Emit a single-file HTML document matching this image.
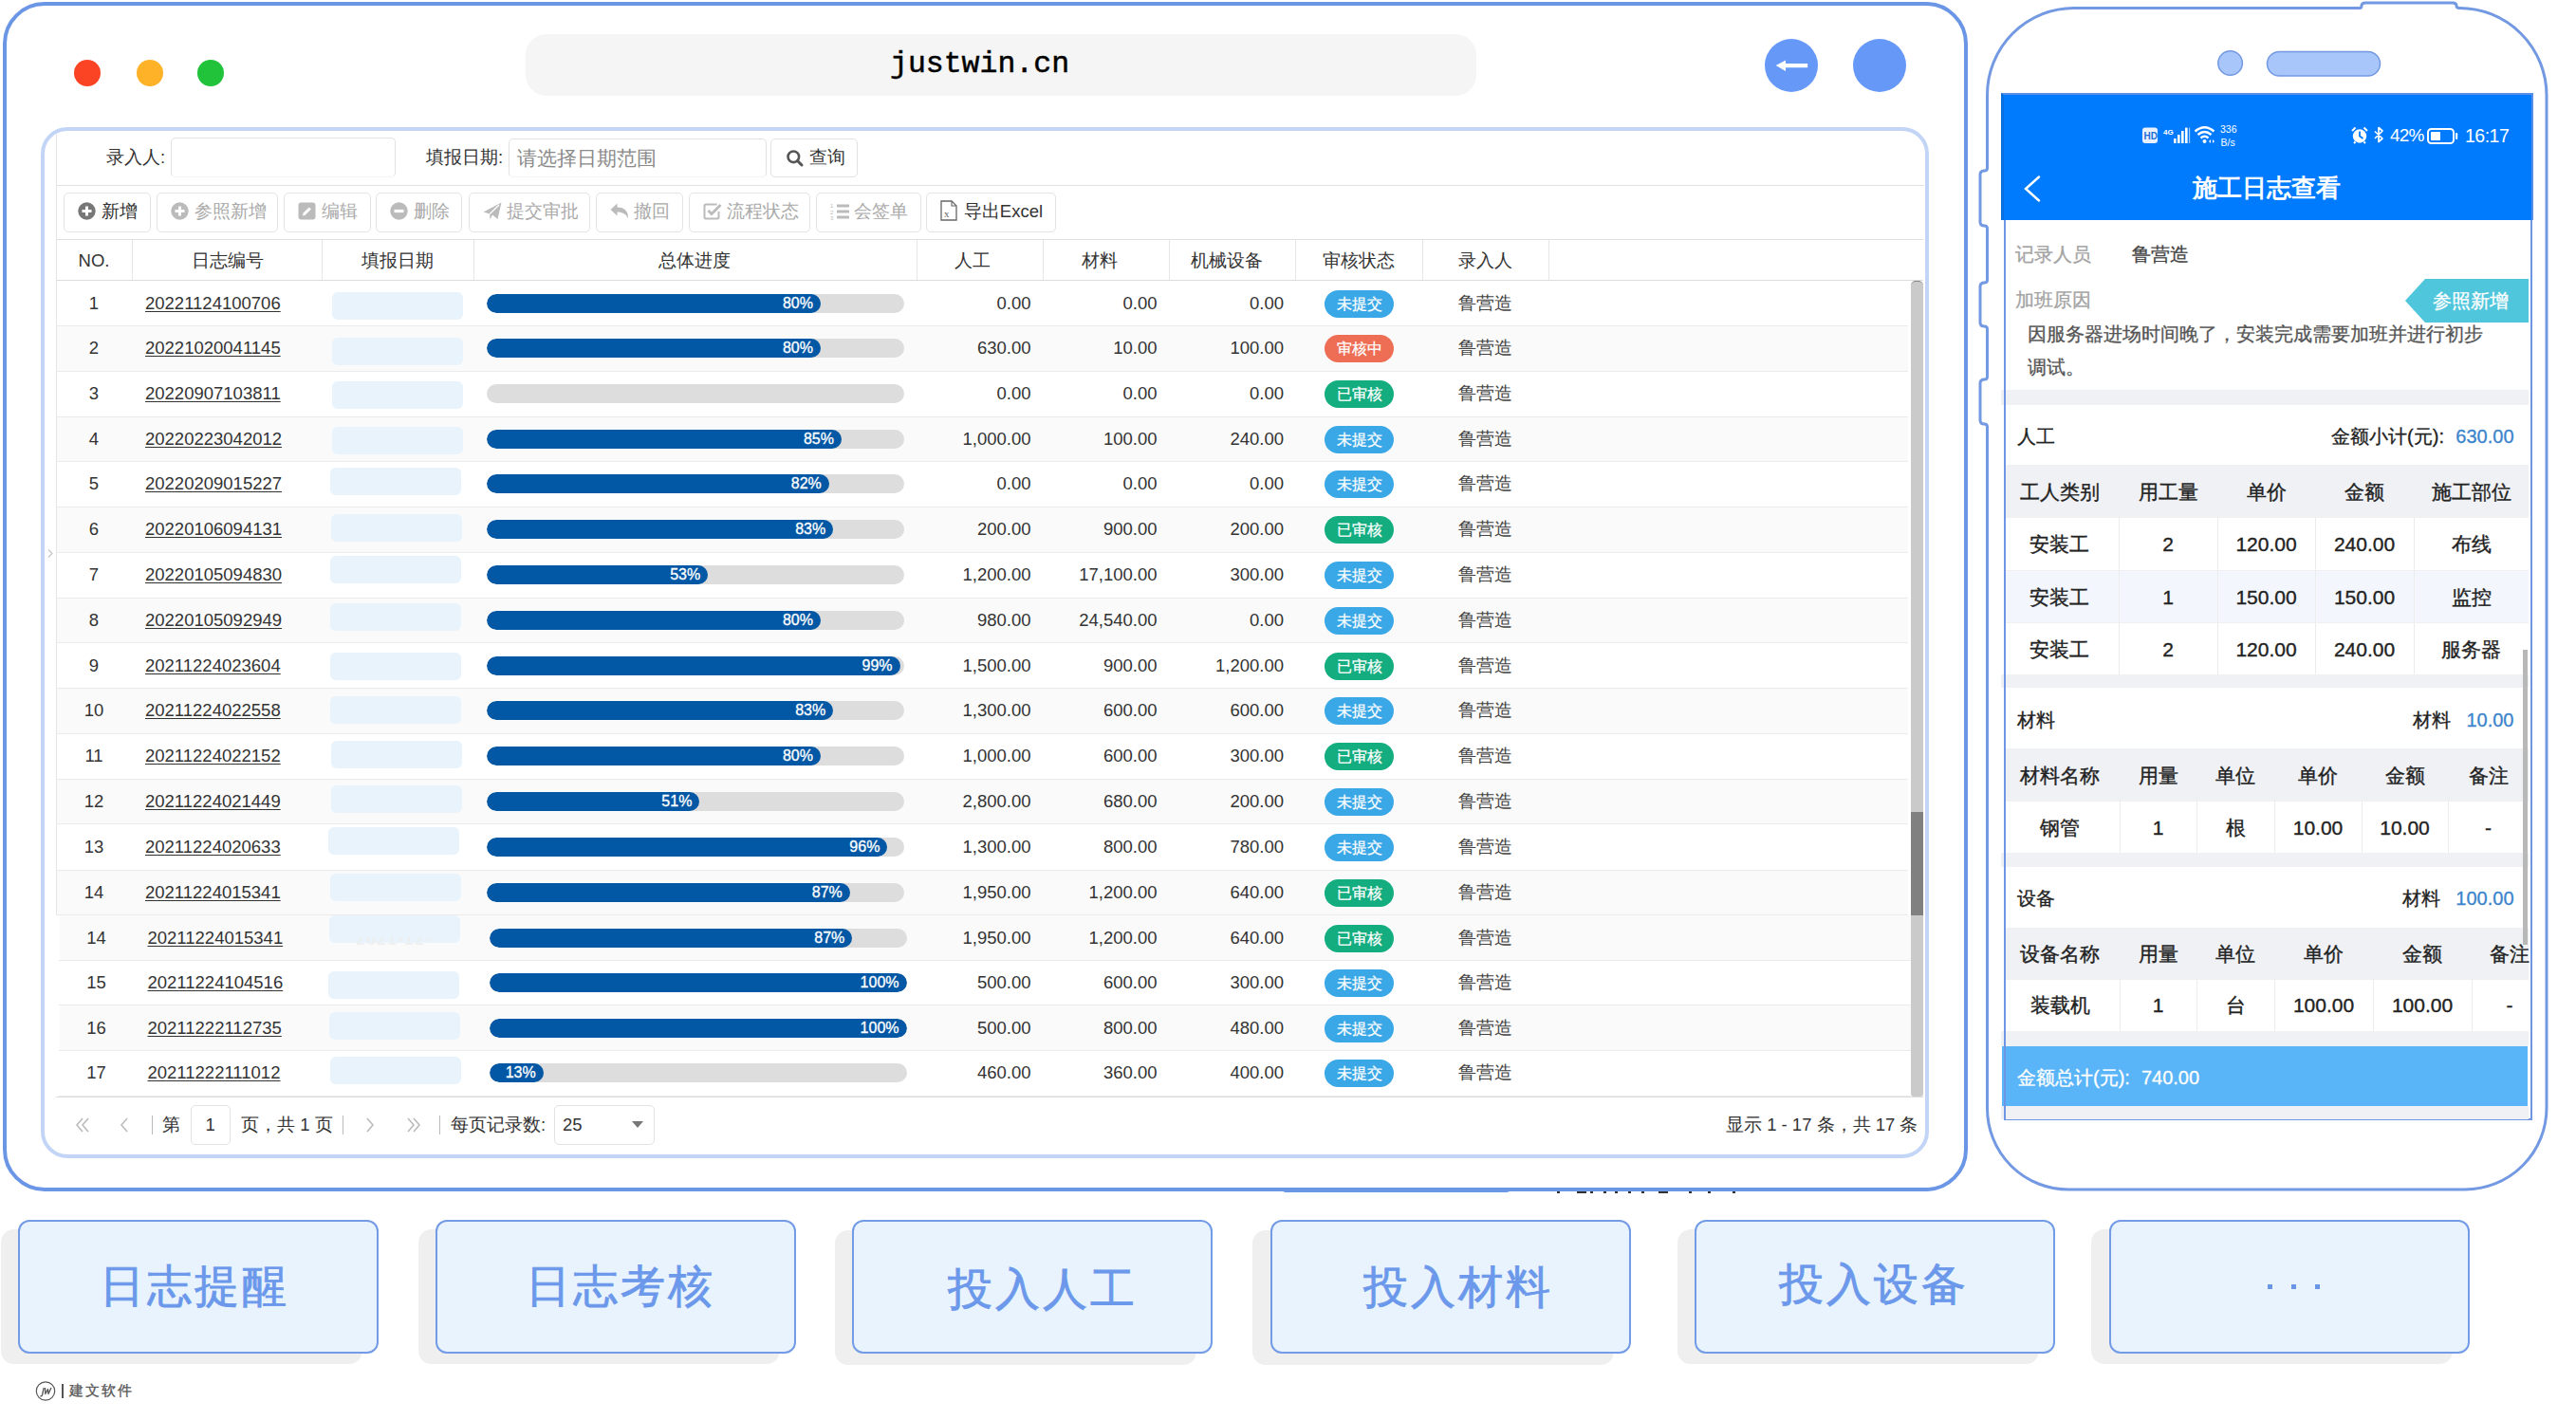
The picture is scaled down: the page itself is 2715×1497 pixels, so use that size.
<!DOCTYPE html>
<html><head><meta charset="utf-8">
<style>
*{box-sizing:border-box;margin:0;padding:0}
html,body{width:2715px;height:1497px;overflow:hidden;background:#fff;font-family:"Liberation Sans",sans-serif;color:#333}
.a{position:absolute}
.frame{left:3px;top:2px;width:2071px;height:1254px;border:4.5px solid #6b96e6;border-radius:44px}
.dot{width:28px;height:28px;border-radius:50%}
.url{left:554px;top:36px;width:1002px;height:65px;background:#f5f5f5;border-radius:22px}
.urltxt{left:938px;top:40px;font-family:"Liberation Mono",monospace;font-size:31.5px;letter-spacing:0;color:#000;line-height:56px;-webkit-text-stroke:0.5px #000}
.circ{width:56px;height:56px;border-radius:50%;background:#6699f7}
.panel{left:43px;top:134px;width:1990px;height:1087px;border:4px solid #c3d5f6;border-radius:28px;background:#fff}
.lbl{font-size:18.5px;color:#333;line-height:22px}
.inp{border:1px solid #e2e2e2;border-radius:5px;background:#fff}
.btn{border:1px solid #e3e3e3;border-radius:5px;height:41.5px;top:203px;font-size:18.5px;line-height:39px;color:#aaa;white-space:nowrap}
.btn.on{color:#333}
.hd{top:252.5px;height:43px;font-size:18.5px;line-height:43px;text-align:center;color:#333}
.vl{top:252.5px;width:1px;height:43px;background:#e6e6e6}
.row{left:60px;width:1951px;height:47.8px}
.row.alt{background:#fafafa}
.c{font-size:18.5px;line-height:47px;color:#333;white-space:nowrap}
.num{text-align:right}
.lnk{text-decoration:underline;text-underline-offset:2px}
.ph{width:138px;height:29px;background:#e8f3fc;border-radius:6px}
.bar{width:440px;height:20px;border-radius:10px;background:#dddddd;overflow:hidden}
.fill{position:absolute;left:0;top:0;height:20px;border-radius:10px;background:#0358a5;color:#fff;font-size:16px;line-height:20px;text-align:right;padding-right:8px;font-weight:normal;-webkit-text-stroke:0.3px #fff}
.bdg{width:73px;height:29px;border-radius:15px;color:#fff;-webkit-text-stroke:0.25px #fff;font-size:16px;line-height:29px;text-align:center}
.b1{background:#3aa7e6}.b2{background:#ee6e55}.b3{background:#13ad7f}
.pg{font-size:18.5px;color:#333;line-height:22px;white-space:nowrap}
.pgi{color:#bbb;font-size:26px;line-height:26px}
.sep{width:1px;height:20px;background:#bbb}
/* phone */
.ph-txt{font-size:21px;line-height:26px;white-space:nowrap;-webkit-text-stroke:0.3px}
.gband{background:#eff1f5}
.pcell{text-align:center;font-size:21px;color:#222;white-space:nowrap;-webkit-text-stroke:0.35px;padding-top:1px}
.bbtn{width:380px;height:141px;border:2px solid #739be6;border-radius:12px;background:#e8f3fd;color:#6b98ea;font-size:47px;text-align:center;line-height:137px;font-weight:bold;letter-spacing:3px}
.btxt{width:380px;height:141px;color:#6b98ea;font-size:47px;text-align:center;line-height:139px;font-weight:normal;-webkit-text-stroke:0.8px #6b98ea;letter-spacing:3px;white-space:nowrap}
.bsh{width:381px;height:142px;border-radius:14px;background:#efefef}
</style></head><body>
<div class="a frame"></div>
<div class="a dot" style="left:78px;top:63px;background:#fb4423"></div>
<div class="a dot" style="left:143.5px;top:63px;background:#fdb228"></div>
<div class="a dot" style="left:208px;top:63px;background:#20c33a"></div>
<div class="a url"></div>
<div class="a urltxt">justwin.cn</div>
<div class="a circ" style="left:1860px;top:40.5px"><svg width="56" height="56" viewBox="0 0 56 56"><path d="M11.7 27.9 L22 22.5 L22 26 L45.2 26 L45.2 30.2 L22 30.2 L22 34 Z" fill="#fff"/></svg></div>
<div class="a circ" style="left:1953px;top:40.5px"></div>
<div class="a panel"></div>
<div class="a" style="left:59px;top:142px;width:1px;height:822px;background:#e5e5e5"></div>
<div class="a lbl" style="left:112px;top:155px">录入人:</div>
<div class="a inp" style="left:180px;top:145px;width:237px;height:42px;border-bottom-color:#f4f4f4"></div>
<div class="a lbl" style="left:449px;top:155px">填报日期:</div>
<div class="a inp" style="left:535.5px;top:146px;width:272px;height:41px;border-bottom-color:#f4f4f4"></div>
<div class="a lbl" style="left:544.5px;top:154px;color:#8a8a8a;font-size:21px;line-height:26px">请选择日期范围</div>
<div class="a inp" style="left:812px;top:146px;width:92px;height:41px"></div>
<div class="a" style="left:828px;top:157px"><svg width="20" height="20" viewBox="0 0 20 20"><circle cx="8.3" cy="8.3" r="5.8" fill="none" stroke="#555" stroke-width="2.6"/><path d="M12.5 12.5 L17 17" stroke="#555" stroke-width="3" stroke-linecap="round"/></svg></div>
<div class="a lbl" style="left:853px;top:155px">查询</div>
<div class="a" style="left:60px;top:195px;width:1968px;height:1px;background:#e2e2e2"></div>
<div class="a btn on" style="left:66.5px;width:92.5px"><span class="a" style="left:14px;top:9px;line-height:0"><svg width="19" height="19" viewBox="0 0 19 19"><circle cx="9.5" cy="9.5" r="9.2" fill="#777"/><path d="M9.5 4.5v10M4.5 9.5h10" stroke="#fff" stroke-width="3"/></svg></span><span class="a" style="left:39px;top:-1.5px">新增</span></div>
<div class="a btn" style="left:164.5px;width:128.5px"><span class="a" style="left:14px;top:9px;line-height:0"><svg width="19" height="19" viewBox="0 0 19 19"><circle cx="9.5" cy="9.5" r="9.2" fill="#bbb"/><path d="M9.5 4.5v10M4.5 9.5h10" stroke="#fff" stroke-width="3"/></svg></span><span class="a" style="left:39px;top:-1.5px">参照新增</span></div>
<div class="a btn" style="left:298.8px;width:92.5px"><span class="a" style="left:14px;top:9px;line-height:0"><svg width="19" height="19" viewBox="0 0 19 19"><rect x="0.5" y="0.5" width="18" height="18" rx="3" fill="#bbb"/><path d="M5 14.5 L5.6 11.6 L11.8 5.4 L13.9 7.5 L7.7 13.7 Z" fill="#fff"/></svg></span><span class="a" style="left:39px;top:-1.5px">编辑</span></div>
<div class="a btn" style="left:395.6px;width:91.5px"><span class="a" style="left:14px;top:9px;line-height:0"><svg width="19" height="19" viewBox="0 0 19 19"><circle cx="9.5" cy="9.5" r="9.2" fill="#bbb"/><path d="M4.5 9.5h10" stroke="#fff" stroke-width="3.2"/></svg></span><span class="a" style="left:39px;top:-1.5px">删除</span></div>
<div class="a btn" style="left:493.6px;width:128.5px"><span class="a" style="left:14px;top:9px;line-height:0"><svg width="20" height="19" viewBox="0 0 20 19"><path d="M0.5 10.5 L19.5 0.5 L15.5 18 L10 13.5 L7.5 18.5 L7.2 12.5 Z" fill="#bbb"/><path d="M7.2 12.5 L17 3" stroke="#fff" stroke-width="1.2"/></svg></span><span class="a" style="left:39px;top:-1.5px">提交审批</span></div>
<div class="a btn" style="left:627.8px;width:92px"><span class="a" style="left:14px;top:9px;line-height:0"><svg width="20" height="19" viewBox="0 0 20 19"><path d="M0.5 8 L7.5 1.5 L7.5 5.5 C14 5.5 19.5 8.5 19 17.5 C17 12.5 13 10.5 7.5 10.5 L7.5 14.5 Z" fill="#bbb"/></svg></span><span class="a" style="left:39px;top:-1.5px">撤回</span></div>
<div class="a btn" style="left:725.6px;width:128.5px"><span class="a" style="left:14px;top:9px;line-height:0"><svg width="20" height="19" viewBox="0 0 20 19"><path d="M14.5 2.5 H3 Q1.5 2.5 1.5 4 V16 Q1.5 17.5 3 17.5 H15 Q16.5 17.5 16.5 16 V10" fill="none" stroke="#bbb" stroke-width="2"/><path d="M5.5 9 L9 12.5 L18.5 3" fill="none" stroke="#bbb" stroke-width="2.8"/></svg></span><span class="a" style="left:39px;top:-1.5px">流程状态</span></div>
<div class="a btn" style="left:860px;width:111px"><span class="a" style="left:14px;top:9px;line-height:0"><svg width="20" height="20" viewBox="0 0 20 20"><path d="M7 4h13M7 10h13M7 16h13" stroke="#bbb" stroke-width="2.8"/><text x="0" y="6" font-size="6" fill="#bbb" font-family="Liberation Sans">1</text><text x="0" y="12.5" font-size="6" fill="#bbb" font-family="Liberation Sans">2</text><text x="0" y="19" font-size="6" fill="#bbb" font-family="Liberation Sans">3</text></svg></span><span class="a" style="left:39px;top:-1.5px">会签单</span></div>
<div class="a btn on" style="left:975.8px;width:137.2px"><span class="a" style="left:14px;top:7px;line-height:0"><svg width="18" height="22" viewBox="0 0 18 22"><path d="M1 1 H12 L17 6 V21 H1 Z" fill="none" stroke="#666" stroke-width="1.3"/><path d="M12 1 V6 H17" fill="none" stroke="#666" stroke-width="1.1"/><text x="4" y="17.5" font-size="11" fill="#666" font-family="Liberation Serif">x</text></svg></span><span class="a" style="left:39px;top:-1.5px">导出Excel</span></div>
<div class="a" style="left:59px;top:252px;width:1968px;height:1px;background:#e0e0e0"></div>
<div class="a hd" style="left:59px;width:80px">NO.</div>
<div class="a hd" style="left:140px;width:200px">日志编号</div>
<div class="a hd" style="left:339px;width:160px">填报日期</div>
<div class="a hd" style="left:499px;width:466.5px">总体进度</div>
<div class="a hd" style="left:958.5px;width:133.5px">人工</div>
<div class="a hd" style="left:1092px;width:133px">材料</div>
<div class="a hd" style="left:1226px;width:133px">机械设备</div>
<div class="a hd" style="left:1365px;width:134px">审核状态</div>
<div class="a hd" style="left:1499px;width:133px">录入人</div>
<div class="a vl" style="left:139px"></div>
<div class="a vl" style="left:339px"></div>
<div class="a vl" style="left:499px"></div>
<div class="a vl" style="left:965.5px"></div>
<div class="a vl" style="left:1099px"></div>
<div class="a vl" style="left:1232px"></div>
<div class="a vl" style="left:1365px"></div>
<div class="a vl" style="left:1499px"></div>
<div class="a vl" style="left:1632px"></div>
<div class="a" style="left:59px;top:295px;width:1968px;height:1px;background:#dcdcdc"></div>
<div class="a row" style="top:296.20px;left:60px;height:47.70px"></div>
<div class="a" style="top:342.90px;left:59px;width:1952px;height:1px;background:#ebebeb"></div>
<div class="a c" style="top:295.70px;left:59px;width:80px;text-align:center">1</div>
<div class="a c lnk" style="top:295.70px;left:153px">20221124100706</div>
<div class="a ph" style="top:308.00px;left:350px"></div>
<div class="a bar" style="top:309.70px;left:513px"><div class="fill" style="width:352.0px">80%</div></div>
<div class="a c num" style="top:295.70px;left:965.5px;width:121px">0.00</div>
<div class="a c num" style="top:295.70px;left:1099px;width:120.5px">0.00</div>
<div class="a c num" style="top:295.70px;left:1232px;width:121px">0.00</div>
<div class="a bdg b1" style="top:305.70px;left:1396px">未提交</div>
<div class="a c" style="top:295.70px;left:1499px;width:133px;text-align:center;color:#444">鲁营造</div>
<div class="a row alt" style="top:343.90px;left:60px;height:48.00px"></div>
<div class="a" style="top:390.90px;left:59px;width:1952px;height:1px;background:#ebebeb"></div>
<div class="a c" style="top:343.40px;left:59px;width:80px;text-align:center">2</div>
<div class="a c lnk" style="top:343.40px;left:153px">20221020041145</div>
<div class="a ph" style="top:355.50px;left:350px"></div>
<div class="a bar" style="top:357.40px;left:513px"><div class="fill" style="width:352.0px">80%</div></div>
<div class="a c num" style="top:343.40px;left:965.5px;width:121px">630.00</div>
<div class="a c num" style="top:343.40px;left:1099px;width:120.5px">10.00</div>
<div class="a c num" style="top:343.40px;left:1232px;width:121px">100.00</div>
<div class="a bdg b2" style="top:353.40px;left:1396px">审核中</div>
<div class="a c" style="top:343.40px;left:1499px;width:133px;text-align:center;color:#444">鲁营造</div>
<div class="a row" style="top:391.90px;left:60px;height:47.90px"></div>
<div class="a" style="top:438.80px;left:59px;width:1952px;height:1px;background:#ebebeb"></div>
<div class="a c" style="top:391.40px;left:59px;width:80px;text-align:center">3</div>
<div class="a c lnk" style="top:391.40px;left:153px">20220907103811</div>
<div class="a ph" style="top:402.40px;left:350px"></div>
<div class="a bar" style="top:405.40px;left:513px"></div>
<div class="a c num" style="top:391.40px;left:965.5px;width:121px">0.00</div>
<div class="a c num" style="top:391.40px;left:1099px;width:120.5px">0.00</div>
<div class="a c num" style="top:391.40px;left:1232px;width:121px">0.00</div>
<div class="a bdg b3" style="top:401.40px;left:1396px">已审核</div>
<div class="a c" style="top:391.40px;left:1499px;width:133px;text-align:center;color:#444">鲁营造</div>
<div class="a row alt" style="top:439.80px;left:60px;height:47.10px"></div>
<div class="a" style="top:485.90px;left:59px;width:1952px;height:1px;background:#ebebeb"></div>
<div class="a c" style="top:439.30px;left:59px;width:80px;text-align:center">4</div>
<div class="a c lnk" style="top:439.30px;left:153px">20220223042012</div>
<div class="a ph" style="top:449.50px;left:350px"></div>
<div class="a bar" style="top:453.30px;left:513px"><div class="fill" style="width:374.0px">85%</div></div>
<div class="a c num" style="top:439.30px;left:965.5px;width:121px">1,000.00</div>
<div class="a c num" style="top:439.30px;left:1099px;width:120.5px">100.00</div>
<div class="a c num" style="top:439.30px;left:1232px;width:121px">240.00</div>
<div class="a bdg b1" style="top:449.30px;left:1396px">未提交</div>
<div class="a c" style="top:439.30px;left:1499px;width:133px;text-align:center;color:#444">鲁营造</div>
<div class="a row" style="top:486.90px;left:60px;height:48.00px"></div>
<div class="a" style="top:533.90px;left:59px;width:1952px;height:1px;background:#ebebeb"></div>
<div class="a c" style="top:486.40px;left:59px;width:80px;text-align:center">5</div>
<div class="a c lnk" style="top:486.40px;left:153px">20220209015227</div>
<div class="a ph" style="top:493.20px;left:347.6px"></div>
<div class="a bar" style="top:500.40px;left:513px"><div class="fill" style="width:360.8px">82%</div></div>
<div class="a c num" style="top:486.40px;left:965.5px;width:121px">0.00</div>
<div class="a c num" style="top:486.40px;left:1099px;width:120.5px">0.00</div>
<div class="a c num" style="top:486.40px;left:1232px;width:121px">0.00</div>
<div class="a bdg b1" style="top:496.40px;left:1396px">未提交</div>
<div class="a c" style="top:486.40px;left:1499px;width:133px;text-align:center;color:#444">鲁营造</div>
<div class="a row alt" style="top:534.90px;left:60px;height:47.90px"></div>
<div class="a" style="top:581.80px;left:59px;width:1952px;height:1px;background:#ebebeb"></div>
<div class="a c" style="top:534.40px;left:59px;width:80px;text-align:center">6</div>
<div class="a c lnk" style="top:534.40px;left:153px">20220106094131</div>
<div class="a ph" style="top:542.40px;left:349px"></div>
<div class="a bar" style="top:548.40px;left:513px"><div class="fill" style="width:365.2px">83%</div></div>
<div class="a c num" style="top:534.40px;left:965.5px;width:121px">200.00</div>
<div class="a c num" style="top:534.40px;left:1099px;width:120.5px">900.00</div>
<div class="a c num" style="top:534.40px;left:1232px;width:121px">200.00</div>
<div class="a bdg b3" style="top:544.40px;left:1396px">已审核</div>
<div class="a c" style="top:534.40px;left:1499px;width:133px;text-align:center;color:#444">鲁营造</div>
<div class="a row" style="top:582.80px;left:60px;height:48.10px"></div>
<div class="a" style="top:629.90px;left:59px;width:1952px;height:1px;background:#ebebeb"></div>
<div class="a c" style="top:582.30px;left:59px;width:80px;text-align:center">7</div>
<div class="a c lnk" style="top:582.30px;left:153px">20220105094830</div>
<div class="a ph" style="top:586.00px;left:348.2px"></div>
<div class="a bar" style="top:596.30px;left:513px"><div class="fill" style="width:233.2px">53%</div></div>
<div class="a c num" style="top:582.30px;left:965.5px;width:121px">1,200.00</div>
<div class="a c num" style="top:582.30px;left:1099px;width:120.5px">17,100.00</div>
<div class="a c num" style="top:582.30px;left:1232px;width:121px">300.00</div>
<div class="a bdg b1" style="top:592.30px;left:1396px">未提交</div>
<div class="a c" style="top:582.30px;left:1499px;width:133px;text-align:center;color:#444">鲁营造</div>
<div class="a row alt" style="top:630.90px;left:60px;height:47.50px"></div>
<div class="a" style="top:677.40px;left:59px;width:1952px;height:1px;background:#ebebeb"></div>
<div class="a c" style="top:630.40px;left:59px;width:80px;text-align:center">8</div>
<div class="a c lnk" style="top:630.40px;left:153px">20220105092949</div>
<div class="a ph" style="top:635.60px;left:348.2px"></div>
<div class="a bar" style="top:644.40px;left:513px"><div class="fill" style="width:352.0px">80%</div></div>
<div class="a c num" style="top:630.40px;left:965.5px;width:121px">980.00</div>
<div class="a c num" style="top:630.40px;left:1099px;width:120.5px">24,540.00</div>
<div class="a c num" style="top:630.40px;left:1232px;width:121px">0.00</div>
<div class="a bdg b1" style="top:640.40px;left:1396px">未提交</div>
<div class="a c" style="top:630.40px;left:1499px;width:133px;text-align:center;color:#444">鲁营造</div>
<div class="a row" style="top:678.40px;left:60px;height:47.50px"></div>
<div class="a" style="top:724.90px;left:59px;width:1952px;height:1px;background:#ebebeb"></div>
<div class="a c" style="top:677.90px;left:59px;width:80px;text-align:center">9</div>
<div class="a c lnk" style="top:677.90px;left:153px">20211224023604</div>
<div class="a ph" style="top:688.00px;left:348.2px"></div>
<div class="a bar" style="top:691.90px;left:513px"><div class="fill" style="width:435.6px">99%</div></div>
<div class="a c num" style="top:677.90px;left:965.5px;width:121px">1,500.00</div>
<div class="a c num" style="top:677.90px;left:1099px;width:120.5px">900.00</div>
<div class="a c num" style="top:677.90px;left:1232px;width:121px">1,200.00</div>
<div class="a bdg b3" style="top:687.90px;left:1396px">已审核</div>
<div class="a c" style="top:677.90px;left:1499px;width:133px;text-align:center;color:#444">鲁营造</div>
<div class="a row alt" style="top:725.90px;left:60px;height:47.90px"></div>
<div class="a" style="top:772.80px;left:59px;width:1952px;height:1px;background:#ebebeb"></div>
<div class="a c" style="top:725.40px;left:59px;width:80px;text-align:center">10</div>
<div class="a c lnk" style="top:725.40px;left:153px">20211224022558</div>
<div class="a ph" style="top:733.90px;left:348.2px"></div>
<div class="a bar" style="top:739.40px;left:513px"><div class="fill" style="width:365.2px">83%</div></div>
<div class="a c num" style="top:725.40px;left:965.5px;width:121px">1,300.00</div>
<div class="a c num" style="top:725.40px;left:1099px;width:120.5px">600.00</div>
<div class="a c num" style="top:725.40px;left:1232px;width:121px">600.00</div>
<div class="a bdg b1" style="top:735.40px;left:1396px">未提交</div>
<div class="a c" style="top:725.40px;left:1499px;width:133px;text-align:center;color:#444">鲁营造</div>
<div class="a row" style="top:773.80px;left:60px;height:48.10px"></div>
<div class="a" style="top:820.90px;left:59px;width:1952px;height:1px;background:#ebebeb"></div>
<div class="a c" style="top:773.30px;left:59px;width:80px;text-align:center">11</div>
<div class="a c lnk" style="top:773.30px;left:153px">20211224022152</div>
<div class="a ph" style="top:781.00px;left:348.8px"></div>
<div class="a bar" style="top:787.30px;left:513px"><div class="fill" style="width:352.0px">80%</div></div>
<div class="a c num" style="top:773.30px;left:965.5px;width:121px">1,000.00</div>
<div class="a c num" style="top:773.30px;left:1099px;width:120.5px">600.00</div>
<div class="a c num" style="top:773.30px;left:1232px;width:121px">300.00</div>
<div class="a bdg b3" style="top:783.30px;left:1396px">已审核</div>
<div class="a c" style="top:773.30px;left:1499px;width:133px;text-align:center;color:#444">鲁营造</div>
<div class="a row alt" style="top:821.90px;left:60px;height:47.50px"></div>
<div class="a" style="top:868.40px;left:59px;width:1952px;height:1px;background:#ebebeb"></div>
<div class="a c" style="top:821.40px;left:59px;width:80px;text-align:center">12</div>
<div class="a c lnk" style="top:821.40px;left:153px">20211224021449</div>
<div class="a ph" style="top:827.70px;left:349px"></div>
<div class="a bar" style="top:835.40px;left:513px"><div class="fill" style="width:224.4px">51%</div></div>
<div class="a c num" style="top:821.40px;left:965.5px;width:121px">2,800.00</div>
<div class="a c num" style="top:821.40px;left:1099px;width:120.5px">680.00</div>
<div class="a c num" style="top:821.40px;left:1232px;width:121px">200.00</div>
<div class="a bdg b1" style="top:831.40px;left:1396px">未提交</div>
<div class="a c" style="top:821.40px;left:1499px;width:133px;text-align:center;color:#444">鲁营造</div>
<div class="a row" style="top:869.40px;left:60px;height:48.10px"></div>
<div class="a" style="top:916.50px;left:59px;width:1952px;height:1px;background:#ebebeb"></div>
<div class="a c" style="top:868.90px;left:59px;width:80px;text-align:center">13</div>
<div class="a c lnk" style="top:868.90px;left:153px">20211224020633</div>
<div class="a ph" style="top:872.20px;left:346px"></div>
<div class="a bar" style="top:882.90px;left:513px"><div class="fill" style="width:422.4px">96%</div></div>
<div class="a c num" style="top:868.90px;left:965.5px;width:121px">1,300.00</div>
<div class="a c num" style="top:868.90px;left:1099px;width:120.5px">800.00</div>
<div class="a c num" style="top:868.90px;left:1232px;width:121px">780.00</div>
<div class="a bdg b1" style="top:878.90px;left:1396px">未提交</div>
<div class="a c" style="top:868.90px;left:1499px;width:133px;text-align:center;color:#444">鲁营造</div>
<div class="a row alt" style="top:917.50px;left:60px;height:47.50px"></div>
<div class="a" style="top:964.00px;left:59px;width:1952px;height:1px;background:#ebebeb"></div>
<div class="a c" style="top:917.00px;left:59px;width:80px;text-align:center">14</div>
<div class="a c lnk" style="top:917.00px;left:153px">20211224015341</div>
<div class="a ph" style="top:920.50px;left:348px"></div>
<div class="a bar" style="top:931.00px;left:513px"><div class="fill" style="width:382.8px">87%</div></div>
<div class="a c num" style="top:917.00px;left:965.5px;width:121px">1,950.00</div>
<div class="a c num" style="top:917.00px;left:1099px;width:120.5px">1,200.00</div>
<div class="a c num" style="top:917.00px;left:1232px;width:121px">640.00</div>
<div class="a bdg b3" style="top:927.00px;left:1396px">已审核</div>
<div class="a c" style="top:917.00px;left:1499px;width:133px;text-align:center;color:#444">鲁营造</div>
<div class="a row alt" style="top:965.00px;left:62.5px;height:47.80px"></div>
<div class="a" style="top:1011.80px;left:61.5px;width:1952px;height:1px;background:#ebebeb"></div>
<div class="a c" style="top:964.50px;left:61.5px;width:80px;text-align:center">14</div>
<div class="a c lnk" style="top:964.50px;left:155.5px">20211224015341</div>
<div class="a ph" style="top:964.50px;left:347px"></div>
<div class="a bar" style="top:978.50px;left:515.5px"><div class="fill" style="width:382.8px">87%</div></div>
<div class="a c num" style="top:964.50px;left:965.5px;width:121px">1,950.00</div>
<div class="a c num" style="top:964.50px;left:1099px;width:120.5px">1,200.00</div>
<div class="a c num" style="top:964.50px;left:1232px;width:121px">640.00</div>
<div class="a bdg b3" style="top:974.50px;left:1396px">已审核</div>
<div class="a c" style="top:964.50px;left:1499px;width:133px;text-align:center;color:#444">鲁营造</div>
<div class="a row" style="top:1012.80px;left:62.5px;height:47.50px"></div>
<div class="a" style="top:1059.30px;left:61.5px;width:1952px;height:1px;background:#ebebeb"></div>
<div class="a c" style="top:1012.30px;left:61.5px;width:80px;text-align:center">15</div>
<div class="a c lnk" style="top:1012.30px;left:155.5px">20211224104516</div>
<div class="a ph" style="top:1024.10px;left:346px"></div>
<div class="a bar" style="top:1026.30px;left:515.5px"><div class="fill" style="width:440.0px">100%</div></div>
<div class="a c num" style="top:1012.30px;left:965.5px;width:121px">500.00</div>
<div class="a c num" style="top:1012.30px;left:1099px;width:120.5px">600.00</div>
<div class="a c num" style="top:1012.30px;left:1232px;width:121px">300.00</div>
<div class="a bdg b1" style="top:1022.30px;left:1396px">未提交</div>
<div class="a c" style="top:1012.30px;left:1499px;width:133px;text-align:center;color:#444">鲁营造</div>
<div class="a row alt" style="top:1060.30px;left:62.5px;height:47.60px"></div>
<div class="a" style="top:1106.90px;left:61.5px;width:1952px;height:1px;background:#ebebeb"></div>
<div class="a c" style="top:1059.80px;left:61.5px;width:80px;text-align:center">16</div>
<div class="a c lnk" style="top:1059.80px;left:155.5px">20211222112735</div>
<div class="a ph" style="top:1066.80px;left:347px"></div>
<div class="a bar" style="top:1073.80px;left:515.5px"><div class="fill" style="width:440.0px">100%</div></div>
<div class="a c num" style="top:1059.80px;left:965.5px;width:121px">500.00</div>
<div class="a c num" style="top:1059.80px;left:1099px;width:120.5px">800.00</div>
<div class="a c num" style="top:1059.80px;left:1232px;width:121px">480.00</div>
<div class="a bdg b1" style="top:1069.80px;left:1396px">未提交</div>
<div class="a c" style="top:1059.80px;left:1499px;width:133px;text-align:center;color:#444">鲁营造</div>
<div class="a row" style="top:1107.90px;left:62.5px;height:48.20px"></div>
<div class="a" style="top:1155.10px;left:61.5px;width:1952px;height:1px;background:#ebebeb"></div>
<div class="a c" style="top:1107.40px;left:61.5px;width:80px;text-align:center">17</div>
<div class="a c lnk" style="top:1107.40px;left:155.5px">20211222111012</div>
<div class="a ph" style="top:1114.00px;left:348px"></div>
<div class="a bar" style="top:1121.40px;left:515.5px"><div class="fill" style="width:57.2px">13%</div></div>
<div class="a c num" style="top:1107.40px;left:965.5px;width:121px">460.00</div>
<div class="a c num" style="top:1107.40px;left:1099px;width:120.5px">360.00</div>
<div class="a c num" style="top:1107.40px;left:1232px;width:121px">400.00</div>
<div class="a bdg b1" style="top:1117.40px;left:1396px">未提交</div>
<div class="a c" style="top:1107.40px;left:1499px;width:133px;text-align:center;color:#444">鲁营造</div>
<div class="a" style="left:375px;top:988px;width:95px;height:8px;overflow:hidden"><div style="margin-top:-8px;font-size:18px;color:#eeeeee;letter-spacing:1px">2021-12-24</div></div>
<svg class="a" style="left:49px;top:578px" width="9" height="11" viewBox="0 0 9 11"><path d="M2 1.5 L6 5.5 L2 9.5" fill="none" stroke="#c4c4c4" stroke-width="1.2"/></svg>
<div class="a" style="left:2014px;top:296px;width:13px;height:860px;background:#cacaca;border-radius:5px 5px 3px 3px;border-top:1.5px solid #888"></div>
<div class="a" style="left:2014px;top:856px;width:13px;height:109px;background:#808080"></div>
<div class="a" style="left:59px;top:1155.5px;width:1968px;height:1px;background:#dcdcdc"></div>
<svg class="a" style="left:79.5px;top:1177.5px" width="16" height="16" viewBox="0 0 16 16"><path d="M7 1 L1 8 L7 15 M13 1 L7 8 L13 15" fill="none" stroke="#bbb" stroke-width="1.6"/></svg>
<svg class="a" style="left:127px;top:1177.5px" width="16" height="16" viewBox="0 0 16 16"><path d="M7 1 L1 8 L7 15" fill="none" stroke="#bbb" stroke-width="1.6"/></svg>
<div class="a sep" style="left:160px;top:1175.5px"></div>
<div class="a pg" style="left:171px;top:1175px">第</div>
<div class="a inp" style="left:201px;top:1164.5px;width:41.5px;height:42px;text-align:center;font-size:18.5px;line-height:40px">1</div>
<div class="a pg" style="left:254px;top:1175px">页，共 1 页</div>
<div class="a sep" style="left:361px;top:1175.5px"></div>
<svg class="a" style="left:386px;top:1177.5px" width="16" height="16" viewBox="0 0 16 16"><path d="M1 1 L7 8 L1 15" fill="none" stroke="#bbb" stroke-width="1.6"/></svg>
<svg class="a" style="left:428.5px;top:1177.5px" width="16" height="16" viewBox="0 0 16 16"><path d="M1 1 L7 8 L1 15 M7 1 L13 8 L7 15" fill="none" stroke="#bbb" stroke-width="1.6"/></svg>
<div class="a sep" style="left:463px;top:1175.5px"></div>
<div class="a pg" style="left:475px;top:1175px">每页记录数:</div>
<div class="a inp" style="left:583.5px;top:1164.5px;width:106px;height:42px"></div>
<div class="a pg" style="left:593px;top:1175px">25</div>
<div class="a" style="left:666px;top:1182px;width:0;height:0;border-left:6.5px solid transparent;border-right:6.5px solid transparent;border-top:7.5px solid #777"></div>
<div class="a pg" style="left:1819px;top:1175px;width:202px;text-align:right">显示 1 - 17 条，共 17 条</div>
<svg class="a" style="left:2080px;top:0" width="620" height="1270" viewBox="0 0 620 1270">
<path d="M14.5 100 A91.5 91.5 0 0 1 106 8.5 L407 8.5 Q409 8.5 409 6 Q409 3 413 3 L505 3 Q509 3 509 6 Q509 8.5 512 8.5 A92 92 0 0 1 604 100.5 L604 1168 A86 86 0 0 1 518 1254 L100 1254 A85.5 85.5 0 0 1 14.5 1168.5 L14.5 450 Q14.5 447 11.5 447 Q7 447 7 443 L7 404 Q7 400 11.5 400 Q14.5 400 14.5 397 L14.5 347 Q14.5 344 11.5 344 Q7 344 7 340 L7 302 Q7 298 11.5 298 Q14.5 298 14.5 295 L14.5 241 Q14.5 238 11.5 238 Q7 238 7 234 L7 184 Q7 180 11.5 180 Q14.5 180 14.5 177 Z" fill="#fff" stroke="#7399e3" stroke-width="3"/>
<circle cx="270.6" cy="66.5" r="12.8" fill="#a8c6fa" stroke="#7399e3" stroke-width="1.5"/>
<rect x="309.5" y="54.5" width="119" height="25.5" rx="12.7" fill="#a8c6fa" stroke="#7399e3" stroke-width="1.5"/>
</svg>
<div class="a" style="left:2112px;top:98px;width:557px;height:1083px;background:#fff;border:2px solid #6f95e5;border-top:none"></div>
<div class="a" style="left:2109px;top:98px;width:560.5px;height:134px;background:#007bfe;border-top:2px solid #5b8ee8;border-right:2px solid #5b8ee8;border-left:3px solid #0a6fe0"></div>
<svg class="a" style="left:2250px;top:125px" width="120" height="35" viewBox="0 0 120 35">
<rect x="8" y="9.6" width="16" height="16.3" rx="3" fill="#e8f1ff"/>
<text x="9.6" y="22.3" font-size="10" font-weight="bold" fill="#1d6fd6" font-family="Liberation Sans">HD</text>
<text x="30" y="16.5" font-size="8" font-weight="bold" fill="#fff" font-family="Liberation Sans">4G</text>
<rect x="41" y="21" width="2.6" height="5" fill="#fff"/><rect x="45" y="17" width="2.6" height="9" fill="#fff"/><rect x="49" y="13" width="2.6" height="13" fill="#fff"/><rect x="53" y="9.6" width="2.6" height="16.4" fill="#fff"/><rect x="57" y="9.6" width="1.2" height="16.4" fill="#9cc4f5"/>
<path d="M63.5 13.5 Q73.5 5 83.5 13.5" fill="none" stroke="#fff" stroke-width="2.4"/>
<path d="M66.5 17 Q73.5 11 80.5 17" fill="none" stroke="#fff" stroke-width="2.4"/>
<path d="M69.5 20.5 Q73.5 17 77.5 20.5" fill="none" stroke="#fff" stroke-width="2.4"/>
<circle cx="73.5" cy="24" r="2" fill="#fff"/>
<path d="M78 24 l2-2 v4z M84 24 l-2-2 v4z" fill="#fff"/>
<text x="90" y="14.5" font-size="10.5" fill="#fff" font-family="Liberation Sans">336</text>
<text x="90.5" y="29" font-size="10.5" fill="#fff" font-family="Liberation Sans">B/s</text>
</svg>
<svg class="a" style="left:2470px;top:125px" width="80" height="35" viewBox="0 0 80 35">
<circle cx="17" cy="18.5" r="7.2" fill="#fff"/>
<path d="M17 13.5 V18.5 L20.5 21" fill="none" stroke="#007bfe" stroke-width="1.8"/>
<path d="M9 13 L12.5 9.5 M25 13 L21.5 9.5 M11 26 L12.5 24.5 M23 26 L21.5 24.5" stroke="#fff" stroke-width="2"/>
<path d="M33 13.5 L41 21 L37 24.5 V9.5 L41 13 L33 21" fill="none" stroke="#fff" stroke-width="1.7" stroke-linejoin="round"/>
</svg>
<div class="a" style="left:2519px;top:132px;font-size:19px;line-height:22px;color:#fff;letter-spacing:-0.8px">42%</div>
<svg class="a" style="left:2556px;top:130px" width="40" height="25" viewBox="0 0 40 25"><rect x="3" y="6" width="27" height="15" rx="3.5" fill="none" stroke="#fff" stroke-width="2"/><rect x="6" y="9" width="10" height="9" rx="1" fill="#fff"/><rect x="32" y="10" width="2.2" height="7" rx="1" fill="#fff"/></svg>
<div class="a" style="left:2598px;top:132px;font-size:19.5px;line-height:22px;color:#fff;letter-spacing:-0.5px">16:17</div>
<svg class="a" style="left:2130px;top:183px" width="24" height="32" viewBox="0 0 24 32"><path d="M19 3.5 L5 16 L19 28.5" fill="none" stroke="#fff" stroke-width="2.4" stroke-linecap="round"/></svg>
<div class="a" style="left:2109px;top:180px;width:560px;text-align:center;font-size:26px;line-height:36px;color:#fff;padding-left:0;-webkit-text-stroke:0.8px #fff">施工日志查看</div>
<div class="a ph-txt" style="left:2124px;top:255px;color:#a3a3a3;font-size:19.5px">记录人员</div>
<div class="a ph-txt" style="left:2247px;top:255px;color:#444;font-size:20px;font-weight:500">鲁营造</div>
<div class="a ph-txt" style="left:2124px;top:303px;color:#a3a3a3;font-size:19.5px">加班原因</div>
<svg class="a" style="left:2535px;top:294px" width="130" height="46" viewBox="0 0 130 46"><path d="M0 23 L21 0 H130 V46 H21 Z" fill="#4fc6dc"/></svg>
<div class="a ph-txt" style="left:2564px;top:304px;color:#fff;font-size:19.5px">参照新增</div>
<div class="a ph-txt" style="left:2137px;top:339px;color:#555;font-size:20px">因服务器进场时间晚了，安装完成需要加班并进行初步</div>
<div class="a ph-txt" style="left:2137px;top:374px;color:#555;font-size:20px">调试。</div>
<div class="a gband" style="left:2109px;top:411px;width:556px;height:16px"></div>
<div class="a gband" style="left:2109px;top:711px;width:556px;height:14px"></div>
<div class="a gband" style="left:2109px;top:899px;width:556px;height:15px"></div>
<div class="a gband" style="left:2109px;top:1087px;width:556px;height:16px"></div>
<div class="a gband" style="left:2109px;top:1166px;width:556px;height:14px"></div>
<div class="a ph-txt" style="left:2126px;top:447px;color:#222;font-size:20px">人工</div>
<div class="a ph-txt" style="left:2300px;top:447px;width:276px;text-align:right;color:#222;font-size:20px">金额小计(元):</div>
<div class="a ph-txt" style="left:2560px;top:447px;width:89.5px;text-align:right;color:#3b84cc;font-size:20px">630.00</div>
<div class="a ph-txt" style="left:2126px;top:746px;color:#222;font-size:20px">材料</div>
<div class="a ph-txt" style="left:2300px;top:746px;width:283px;text-align:right;color:#222;font-size:20px">材料</div>
<div class="a ph-txt" style="left:2560px;top:746px;width:89.5px;text-align:right;color:#3b84cc;font-size:20px">10.00</div>
<div class="a ph-txt" style="left:2126px;top:934px;color:#222;font-size:20px">设备</div>
<div class="a ph-txt" style="left:2300px;top:934px;width:272px;text-align:right;color:#222;font-size:20px">材料</div>
<div class="a ph-txt" style="left:2560px;top:934px;width:89.5px;text-align:right;color:#3b84cc;font-size:20px">100.00</div>
<div class="a gband" style="left:2114px;top:490px;width:551px;height:55.3px"></div>
<div class="a pcell" style="left:2111px;top:490px;width:119px;line-height:55.3px;color:#222">工人类别</div>
<div class="a pcell" style="left:2233px;top:490px;width:104px;line-height:55.3px;color:#222">用工量</div>
<div class="a pcell" style="left:2337px;top:490px;width:103px;line-height:55.3px;color:#222">单价</div>
<div class="a pcell" style="left:2440px;top:490px;width:104px;line-height:55.3px;color:#222">金额</div>
<div class="a pcell" style="left:2544px;top:490px;width:121px;line-height:55.3px;color:#222">施工部位</div>
<div class="a" style="left:2114px;top:545.3px;width:551px;height:55.3px;background:#fff;border-top:1px solid #f0f0f0"></div>
<div class="a" style="left:2233px;top:545.3px;width:1px;height:55.3px;background:#ececec"></div>
<div class="a" style="left:2337px;top:545.3px;width:1px;height:55.3px;background:#ececec"></div>
<div class="a" style="left:2440px;top:545.3px;width:1px;height:55.3px;background:#ececec"></div>
<div class="a" style="left:2544px;top:545.3px;width:1px;height:55.3px;background:#ececec"></div>
<div class="a pcell" style="left:2111px;top:545.3px;width:119px;line-height:55.3px">安装工</div>
<div class="a pcell" style="left:2233px;top:545.3px;width:104px;line-height:55.3px">2</div>
<div class="a pcell" style="left:2337px;top:545.3px;width:103px;line-height:55.3px">120.00</div>
<div class="a pcell" style="left:2440px;top:545.3px;width:104px;line-height:55.3px">240.00</div>
<div class="a pcell" style="left:2544px;top:545.3px;width:121px;line-height:55.3px">布线</div>
<div class="a" style="left:2114px;top:600.6px;width:551px;height:55.3px;background:#f3f7fd;border-top:1px solid #f0f0f0"></div>
<div class="a" style="left:2233px;top:600.6px;width:1px;height:55.3px;background:#ececec"></div>
<div class="a" style="left:2337px;top:600.6px;width:1px;height:55.3px;background:#ececec"></div>
<div class="a" style="left:2440px;top:600.6px;width:1px;height:55.3px;background:#ececec"></div>
<div class="a" style="left:2544px;top:600.6px;width:1px;height:55.3px;background:#ececec"></div>
<div class="a pcell" style="left:2111px;top:600.6px;width:119px;line-height:55.3px">安装工</div>
<div class="a pcell" style="left:2233px;top:600.6px;width:104px;line-height:55.3px">1</div>
<div class="a pcell" style="left:2337px;top:600.6px;width:103px;line-height:55.3px">150.00</div>
<div class="a pcell" style="left:2440px;top:600.6px;width:104px;line-height:55.3px">150.00</div>
<div class="a pcell" style="left:2544px;top:600.6px;width:121px;line-height:55.3px">监控</div>
<div class="a" style="left:2114px;top:655.9px;width:551px;height:55.3px;background:#fff;border-top:1px solid #f0f0f0"></div>
<div class="a" style="left:2233px;top:655.9px;width:1px;height:55.3px;background:#ececec"></div>
<div class="a" style="left:2337px;top:655.9px;width:1px;height:55.3px;background:#ececec"></div>
<div class="a" style="left:2440px;top:655.9px;width:1px;height:55.3px;background:#ececec"></div>
<div class="a" style="left:2544px;top:655.9px;width:1px;height:55.3px;background:#ececec"></div>
<div class="a pcell" style="left:2111px;top:655.9px;width:119px;line-height:55.3px">安装工</div>
<div class="a pcell" style="left:2233px;top:655.9px;width:104px;line-height:55.3px">2</div>
<div class="a pcell" style="left:2337px;top:655.9px;width:103px;line-height:55.3px">120.00</div>
<div class="a pcell" style="left:2440px;top:655.9px;width:104px;line-height:55.3px">240.00</div>
<div class="a pcell" style="left:2544px;top:655.9px;width:121px;line-height:55.3px">服务器</div>
<div class="a gband" style="left:2114px;top:789px;width:551px;height:55px"></div>
<div class="a pcell" style="left:2111px;top:789px;width:120px;line-height:55px;color:#222">材料名称</div>
<div class="a pcell" style="left:2234px;top:789px;width:81px;line-height:55px;color:#222">用量</div>
<div class="a pcell" style="left:2315px;top:789px;width:82px;line-height:55px;color:#222">单位</div>
<div class="a pcell" style="left:2397px;top:789px;width:92px;line-height:55px;color:#222">单价</div>
<div class="a pcell" style="left:2489px;top:789px;width:91px;line-height:55px;color:#222">金额</div>
<div class="a pcell" style="left:2580px;top:789px;width:85px;line-height:55px;color:#222">备注</div>
<div class="a" style="left:2114px;top:844px;width:551px;height:55px;background:#fff;border-top:1px solid #f0f0f0"></div>
<div class="a" style="left:2234px;top:844px;width:1px;height:55px;background:#ececec"></div>
<div class="a" style="left:2315px;top:844px;width:1px;height:55px;background:#ececec"></div>
<div class="a" style="left:2397px;top:844px;width:1px;height:55px;background:#ececec"></div>
<div class="a" style="left:2489px;top:844px;width:1px;height:55px;background:#ececec"></div>
<div class="a" style="left:2580px;top:844px;width:1px;height:55px;background:#ececec"></div>
<div class="a pcell" style="left:2111px;top:844px;width:120px;line-height:55px">钢管</div>
<div class="a pcell" style="left:2234px;top:844px;width:81px;line-height:55px">1</div>
<div class="a pcell" style="left:2315px;top:844px;width:82px;line-height:55px">根</div>
<div class="a pcell" style="left:2397px;top:844px;width:92px;line-height:55px">10.00</div>
<div class="a pcell" style="left:2489px;top:844px;width:91px;line-height:55px">10.00</div>
<div class="a pcell" style="left:2580px;top:844px;width:85px;line-height:55px">-</div>
<div class="a gband" style="left:2114px;top:977.5px;width:551px;height:54.7px"></div>
<div class="a pcell" style="left:2111px;top:977.5px;width:120px;line-height:54.7px;color:#222">设备名称</div>
<div class="a pcell" style="left:2234px;top:977.5px;width:81px;line-height:54.7px;color:#222">用量</div>
<div class="a pcell" style="left:2315px;top:977.5px;width:82px;line-height:54.7px;color:#222">单位</div>
<div class="a pcell" style="left:2397px;top:977.5px;width:104px;line-height:54.7px;color:#222">单价</div>
<div class="a pcell" style="left:2501px;top:977.5px;width:104px;line-height:54.7px;color:#222">金额</div>
<div class="a pcell" style="left:2605px;top:977.5px;width:80px;line-height:54.7px;color:#222">备注</div>
<div class="a" style="left:2114px;top:1032.2px;width:551px;height:54.7px;background:#fff;border-top:1px solid #f0f0f0"></div>
<div class="a" style="left:2234px;top:1032.2px;width:1px;height:54.7px;background:#ececec"></div>
<div class="a" style="left:2315px;top:1032.2px;width:1px;height:54.7px;background:#ececec"></div>
<div class="a" style="left:2397px;top:1032.2px;width:1px;height:54.7px;background:#ececec"></div>
<div class="a" style="left:2501px;top:1032.2px;width:1px;height:54.7px;background:#ececec"></div>
<div class="a" style="left:2605px;top:1032.2px;width:1px;height:54.7px;background:#ececec"></div>
<div class="a pcell" style="left:2111px;top:1032.2px;width:120px;line-height:54.7px">装载机</div>
<div class="a pcell" style="left:2234px;top:1032.2px;width:81px;line-height:54.7px">1</div>
<div class="a pcell" style="left:2315px;top:1032.2px;width:82px;line-height:54.7px">台</div>
<div class="a pcell" style="left:2397px;top:1032.2px;width:104px;line-height:54.7px">100.00</div>
<div class="a pcell" style="left:2501px;top:1032.2px;width:104px;line-height:54.7px">100.00</div>
<div class="a pcell" style="left:2605px;top:1032.2px;width:80px;line-height:54.7px">-</div>
<div class="a" style="left:2110px;top:1103px;width:554px;height:63px;background:#5ab4f8"></div>
<div class="a ph-txt" style="left:2126px;top:1123px;color:#fff;font-size:20px">金额总计(元):<span style="margin-left:12px">740.00</span></div>
<div class="a" style="left:2112px;top:232px;width:2px;height:949px;background:#6f95e5"></div>
<div class="a" style="left:2667px;top:232px;width:2px;height:949px;background:#6f95e5"></div>
<div class="a" style="left:2659px;top:685px;width:5px;height:311px;background:#b8b8b8"></div>
<div class="a bsh" style="left:0.5px;top:1296.0px"></div>
<div class="a bsh" style="left:440.5px;top:1296.0px"></div>
<div class="a bsh" style="left:879.5px;top:1296.5px"></div>
<div class="a bsh" style="left:1320.1px;top:1296.5px"></div>
<div class="a bsh" style="left:1767.8px;top:1296.1px"></div>
<div class="a bsh" style="left:2204.3px;top:1296.1px"></div>
<div class="a bbtn" style="left:19px;top:1285.5px"></div>
<div class="a btxt" style="left:14.5px;top:1286.1px">日志提醒</div>
<div class="a bbtn" style="left:459px;top:1285.5px"></div>
<div class="a btxt" style="left:464.0px;top:1286.25px">日志考核</div>
<div class="a bbtn" style="left:898px;top:1286px"></div>
<div class="a btxt" style="left:909.0px;top:1288.6px">投入人工</div>
<div class="a bbtn" style="left:1338.6px;top:1286px"></div>
<div class="a btxt" style="left:1347.3999999999999px;top:1286.8px">投入材料</div>
<div class="a bbtn" style="left:1786.3px;top:1285.6px"></div>
<div class="a btxt" style="left:1785.1499999999999px;top:1283.9499999999998px">投入设备</div>
<div class="a bbtn" style="left:2222.8px;top:1285.6px"></div>
<div class="a" style="left:2390px;top:1354px;width:5px;height:5px;background:#6895e6"></div>
<div class="a" style="left:2415px;top:1354px;width:5px;height:5px;background:#6895e6"></div>
<div class="a" style="left:2440px;top:1354px;width:5px;height:5px;background:#6895e6"></div>
<svg class="a" style="left:36.5px;top:1455.5px" width="22" height="22" viewBox="0 0 22 22"><circle cx="11" cy="10.5" r="9.7" fill="none" stroke="#555" stroke-width="1.2"/><path d="M9.2 7 L7.6 14.5 Q7.2 16 5.5 16" fill="none" stroke="#555" stroke-width="1.3"/><path d="M10.5 7 L10.8 13.5 L13.5 8.5 L14 13.5 L17 7" fill="none" stroke="#555" stroke-width="1.3" stroke-linejoin="round"/></svg>
<div class="a" style="left:64.8px;top:1459px;width:2.2px;height:14.5px;background:#555"></div>
<div class="a" style="left:73px;top:1455px;font-size:15px;line-height:22px;color:#555;letter-spacing:2.1px;-webkit-text-stroke:0.3px #555">建文软件</div>
<div class="a" style="left:1352px;top:1252px;width:239px;height:5px;background:#6b96e6;border-radius:0 0 3px 3px"></div>
<div class="a" style="left:1641px;top:1255.5px;width:3px;height:2.5px;background:#333"></div>
<div class="a" style="left:1662px;top:1255.5px;width:10px;height:2.5px;background:#333"></div>
<div class="a" style="left:1676px;top:1255.5px;width:3px;height:2.5px;background:#333"></div>
<div class="a" style="left:1690px;top:1255.5px;width:3px;height:2.5px;background:#333"></div>
<div class="a" style="left:1702px;top:1255.5px;width:3px;height:2.5px;background:#333"></div>
<div class="a" style="left:1716px;top:1255.5px;width:3px;height:2.5px;background:#333"></div>
<div class="a" style="left:1730px;top:1255.5px;width:3px;height:2.5px;background:#333"></div>
<div class="a" style="left:1748px;top:1255.5px;width:10px;height:2.5px;background:#333"></div>
<div class="a" style="left:1780px;top:1255.5px;width:3px;height:2.5px;background:#333"></div>
<div class="a" style="left:1800px;top:1255.5px;width:3px;height:2.5px;background:#333"></div>
<div class="a" style="left:1826px;top:1255.5px;width:3px;height:2.5px;background:#333"></div>
</body></html>
